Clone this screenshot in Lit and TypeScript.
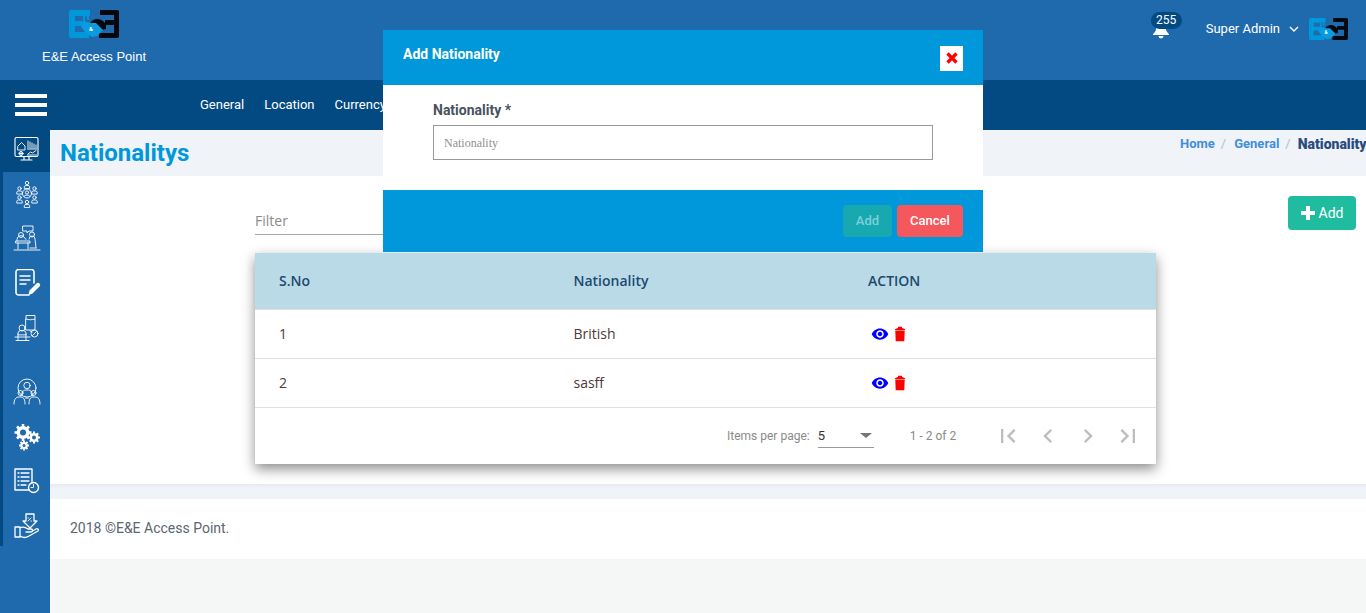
import { LitElement, html, css, svg } from "lit";
import { customElement } from "lit/decorators.js";

const logo = (w: number, h: number) => html`<svg class="logo" width=${w} height=${h} viewBox="0 0 50 28">
  <path d="M2 0h19v6H6v5h9v5H6v6h14v6H2a2 2 0 0 1-2-2V2a2 2 0 0 1 2-2z" fill="#0098da"/>
  <path d="M31 0h17a2 2 0 0 1 2 2v24a2 2 0 0 1-2 2H30v-5h15v-8h-9v-5h9V5H31z" fill="#05090f"/>
  <path d="M20 14c4-6 10-6 14-3l3 3v5l-4 1-5-5-4 1z" fill="#05090f"/>
  <path d="M15 11l7 2 5 0 7 7-3 3-3 3-5 1-6-4-5-6z" fill="#0a9be0"/>
  <path d="M14 6h2v6h-2zM18 6h2v4h-2z" fill="#0098da"/>
  <text x="20" y="21" font-size="6" font-family="Roboto, sans-serif" font-weight="700" fill="#fff">&amp;</text>
</svg>`;

const s = (body: unknown) => html`<svg class="nav-icon" width="28" height="28" viewBox="0 0 28 28" fill="none" stroke="#fff" stroke-width="0.9" stroke-linecap="round" stroke-linejoin="round">${body}</svg>`;

const person = (x: number, y: number, r = 2) => svg`<circle cx=${x} cy=${y} r=${r}/><path d="M${x - r - 1} ${y + r + 3.5}v-1.5a${r} ${r} 0 0 1 ${r} -${r - 0.5}h2a${r} ${r} 0 0 1 ${r} ${r - 0.5}v1.5z"/>`;

const icons = [
  s(svg`<rect stroke-width="1.100" x="2" y="1.500" width="23" height="19" rx="1.500"/><path d="M5 10l3.500-3.500L12 10v4H5zM15 12V5M17 12V6M19 12V7M21 12V8M23 12V9M14.500 13h9M15 18l2.500-2 2 1 3.500-2.500M14.500 19h9"/><circle cx="8" cy="17.500" r="2"/><path d="M8 15.500v4M6 17.500h4"/><path stroke-width="1.200" d="M11 21v2M16 21v2M8 24h11"/>`),
  s(svg`${person(14, 3, 1.700)}${person(6.500, 8.500, 1.700)}${person(21.500, 8.500, 1.700)}${person(6.500, 17.500, 1.700)}${person(21.500, 17.500, 1.700)}${person(14, 22, 1.700)}<circle cx="14" cy="13.500" r="4.500"/><circle cx="14" cy="12.500" r="1.600"/><path d="M11 16.500c0-2 6-2 6 0"/>`),
  s(svg`<path d="M10 1h10v5h-4l-2 2V6h-4z"/><circle cx="8" cy="10" r="2.500"/><circle cx="19" cy="9.500" r="2.500"/><path d="M4 16v-1.500a4 4 0 0 1 7-2.500l2 2.500M16 14a3 3 0 0 1 6 0l1 9M3 16h14v2H3zM5 18v6M15 18v6M17 23h6M1 25h26"/>`),
  s(svg`<path stroke-width="1.600" d="M16 26H5.500a2.500 2.500 0 0 1-2.500-2.500V3a2.500 2.500 0 0 1 2.500-2.500h13A2.500 2.500 0 0 1 21 3v11"/><path stroke-width="1.500" d="M7 7h10M7 11h10M7 15h6"/><path fill="#fff" stroke="none" d="M15.500 26l1-4.500 7-7a2 2 0 0 1 3 3l-7 7z"/>`),
  s(svg`<path d="M13 5V1.500h9V5M13 5c3 1 6 1 9 0v11h-9z"/><circle cx="21.500" cy="19.500" r="3.500"/><path d="M19.500 21.500l4-4M17 17l2 1"/>${person(9, 14, 3)}<path d="M2 23h15M3 26.500h13M5 20v6.500M13 20v6.500"/>`),
  s(svg`<circle cx="14" cy="10" r="9"/><circle cx="14" cy="7.500" r="3.200"/><path d="M8 18c1-5 3-6 5-6h2c2 0 4 1 5 6"/><circle cx="7.500" cy="15" r="2.500"/><circle cx="20.500" cy="15" r="2.500"/><path d="M1 26c0-5 2-7 5-7h2c3 0 4 3 4 7M16 26c0-4 1-7 4-7h2c3 0 5 2 5 7M12.500 20h3"/>`),
  html`<svg class="nav-icon" width="28" height="28" viewBox="0 0 28 28">
    <g fill="#fff">
      <circle cx="10" cy="9.500" r="6.500"/><g stroke="#fff" stroke-width="2.600"><path d="M10 1v17M1.500 9.500h17M4 3.500l12 12M16 3.500l-12 12"/></g>
      <circle cx="21" cy="14.500" r="4.600"/><g stroke="#fff" stroke-width="2"><path d="M21 8.500v12M15 14.500h12M16.800 10.300l8.400 8.400M25.200 10.300l-8.400 8.400"/></g>
      <circle cx="11" cy="22.500" r="3.600"/><g stroke="#fff" stroke-width="1.800"><path d="M11 17.500v10M6 22.500h10M7.500 19l7 7M14.500 19l-7 7"/></g>
    </g>
    <circle cx="10" cy="9.500" r="3" fill="#1f6aad"/><circle cx="21" cy="14.500" r="2" fill="#1f6aad"/><circle cx="11" cy="22.500" r="1.500" fill="#1f6aad"/>
  </svg>`,
  s(svg`<path stroke-width="1.400" d="M16 23H2V2h17v14"/><path stroke-width="1.300" d="M5 6h1M8 6h8M5 10h1M8 10h8M5 14h1M8 14h8M5 18h1M8 18h5"/><circle stroke-width="1.400" cx="20.500" cy="20.500" r="5"/><path d="M20.500 17.500v3h-2.500"/>`),
  s(svg`<path stroke-width="1.300" d="M13 2h8v7h3l-7 7-7-7h3z"/><path d="M15 9l3-3M15 6h.5M18 9h.5"/><path stroke-width="1.300" d="M2 15h5v10H2zM7 16c3-2 5-1 8 1h3a1.500 1.500 0 0 1 0 3h-5M7 24c3 2 6 2 9 0l9-5c1-1 0-3-2-2l-5 3"/>`),
];

const eye = html`<svg class="act" width="18" height="18" viewBox="0 0 24 24" fill="#0000ff"><path d="M12 4.500C7 4.500 2.730 7.610 1 12c1.730 4.390 6 7.500 11 7.500s9.270-3.110 11-7.500c-1.730-4.390-6-7.500-11-7.500zM12 17c-2.760 0-5-2.240-5-5s2.240-5 5-5 5 2.240 5 5-2.240 5-5 5zm0-8c-1.660 0-3 1.340-3 3s1.340 3 3 3 3-1.340 3-3-1.340-3-3-3z"/></svg>`;
const bin = html`<svg class="act" width="12" height="16" viewBox="0 0 12 16" fill="#ff0000"><path d="M1 3.200C2 2.500 3 2.200 4 2V.8h4V2c1 .2 2 .5 3 1.200V4.300H1zM1.300 4.800h9.400l-.4 10.400H1.700z"/></svg>`;
const pg = (d: string) => html`<span class="pg"><svg width="28" height="28" viewBox="0 0 24 24" fill="#bdbdbd"><path d=${d}/></svg></span>`;

@customElement("app-root")
export class AppRoot extends LitElement {
  static styles = css`
    :host { display: block; position: relative; width: 1366px; height: 613px; overflow: hidden; font-family: Roboto, sans-serif; background: #f5f7f7; }
    .top { height: 80px; background: #1f6aad; display: flex; color: #fff; }
    .brand { width: 188px; display: flex; flex-direction: column; align-items: center; padding-top: 10px; box-sizing: border-box; }
    .brand .logo { display: block; }
    .brand span { font-family: "Liberation Sans", Arial, sans-serif; font-size: 13px; margin-top: 11px; line-height: 16px; }
    .top-right { margin-left: auto; display: flex; align-items: flex-start; padding-right: 18px; }
    .bell { position: relative; width: 31px; height: 40px; margin-right: 24px; }
    .bell svg { position: absolute; left: 1px; top: 24px; }
    .badge { position: absolute; left: 0; top: 12px; width: 31px; height: 17px; border-radius: 9px; background: #044a82; font-size: 12px; line-height: 17px; text-align: center; }
    .user { font-size: 13px; line-height: 16px; padding-top: 21px; display: flex; align-items: center; height: 16px; }
    .user svg { margin-left: 8px; }
    .top-right > .logo { margin: 18px 0 0 9px; }

    .nav { height: 50px; background: #044a82; display: flex; align-items: center; color: #fff; }
    .burger { width: 200px; padding-left: 15px; box-sizing: border-box; display: flex; flex-direction: column; gap: 5px; }
    .burger i { display: block; width: 32px; height: 4px; background: #fff; }
    .links { display: flex; gap: 20px; font-size: 13px; margin-top: -1px; }

    .layout { display: flex; height: 483px; }
    .side { width: 50px; flex: none; background: #1f6aad; }
    .side .active { height: 42px; background: #044a82; display: flex; align-items: center; justify-content: center; padding-left: 3px; padding-bottom: 2px; box-sizing: border-box; }
    .group { height: 374px; border-left: 3px solid #044a82; box-sizing: border-box; }
    .item { height: 44.500px; display: flex; align-items: center; justify-content: center; box-sizing: border-box; }
    .gap { margin-top: 20px; }
    .side svg { display: block; }

    .content { flex: 1; min-width: 0; display: flex; flex-direction: column; }
    .title { height: 46px; flex: none; background: #f0f3f8; display: flex; padding-left: 10px; overflow: hidden; }
    h1 { flex: 1; margin: 0; font-size: 24px; line-height: 46px; font-weight: 700; color: #0098da; }
    .crumbs { flex: none; width: 186px; display: flex; font-size: 13px; font-weight: 700; line-height: 16px; padding-top: 6px; white-space: nowrap; color: #3f8fdc; }
    .crumbs em { font-style: normal; font-weight: 400; color: #b5bcc4; margin: 0 8px 0 6px; }
    .crumbs b { color: #2b4c7e; font-size: 14px; margin-left: -1px; }

    .main { height: 308px; flex: none; background: #fff; padding: 20px 10px 0 205px; box-sizing: border-box; }
    .tools { display: flex; height: 57px; }
    .filter { width: 345px; height: 39px; border-bottom: 1px solid #a8a8a8; font-family: "Open Sans", sans-serif; font-size: 14px; color: #8a8a8a; line-height: 50px; box-sizing: border-box; }
    .add-btn { margin-left: auto; width: 68px; height: 34px; border-radius: 4px; background: #20bca0; color: #fff; font-size: 14px; display: flex; align-items: center; justify-content: center; gap: 4px; }
    .card { width: 901px; height: 211px; background: #fff; box-shadow: 0 5px 12px rgba(0,0,0,.45); font-family: "Open Sans", sans-serif; font-size: 14px; }
    .row { display: grid; grid-template-columns: 294.500px 294.500px 1fr; padding: 0 0 2px 24px; align-items: center; height: 49px; border-bottom: 1px solid #e0e0e0; box-sizing: border-box; color: #4e3a3a; }
    .row.head { height: 57px; background: #bbdae8; font-weight: 600; color: #1b4a6e; }
    .acts { display: flex; align-items: center; gap: 5px; padding: 2px 0 0 3px; }
    .act { display: block; }
    .pager { height: 56px; display: flex; align-items: center; font-family: Roboto, sans-serif; font-size: 12px; color: #8a8a8a; padding-left: 472px; }
    .per { margin-right: 8px; }
    .sel { width: 56px; height: 25px; border-bottom: 1px solid #9a9a9a; box-sizing: border-box; display: flex; align-items: center; justify-content: space-between; font-size: 13px; color: #333; margin-top: -1px; }
    .sel i { width: 0; height: 0; border-left: 6px solid transparent; border-right: 6px solid transparent; border-top: 5px solid #757575; margin-right: 2px; }
    .range { margin-left: 36px; width: 74px; margin-right: 4px; margin-top: -1px; }
    .pg { width: 40px; height: 40px; display: flex; align-items: center; justify-content: center; }
    .pg svg { display: block; }

    .sep { height: 15px; flex: none; background: linear-gradient(#e8ebf0, #f0f3f8 5px); box-sizing: border-box; }
    .foot { height: 60px; flex: none; background: #fff; font-family: Roboto, sans-serif; font-size: 14px; color: #5b6670; line-height: 58px; padding-left: 20px; }
    .rest { flex: 1; background: #f5f7f7; }

    .modal { position: absolute; left: 383px; top: 30px; width: 600px; height: 222px; display: flex; flex-direction: column; background: #fff; }
    .m-head { height: 55px; background: #0098da; display: flex; align-items: center; justify-content: space-between; padding: 0 20px; box-sizing: border-box; color: #fff; font-size: 14px; font-weight: 700; }
    .m-head span { margin-top: -7px; }
    .close { width: 23px; height: 25px; background: #fff; display: flex; align-items: center; justify-content: center; margin-top: 1px; }
    .m-body { height: 105px; padding: 17px 50px 0; box-sizing: border-box; }
    .m-body label { display: block; font-size: 14px; font-weight: 700; color: #47525e; line-height: 16px; margin-bottom: 7px; }
    .input { height: 35px; border: 1px solid #999; box-sizing: border-box; font-family: "Liberation Serif", serif; font-size: 12px; color: #8f8f8f; padding-left: 10px; line-height: 35px; }
    .m-foot { height: 62px; background: #0098da; display: flex; justify-content: flex-end; align-items: center; gap: 5px; padding: 0 20px; box-sizing: border-box; font-size: 13px; font-weight: 500; }
    .btn { height: 32px; border-radius: 4px; display: flex; align-items: center; justify-content: center; padding-bottom: 2px; box-sizing: border-box; }
    .btn.a { width: 49px; background: #17a8b0; color: #7fcfdc; }
    .btn.c { width: 66px; background: #f4575c; color: #fff; }
  `;

  render() {
    return html`
      <div class="top">
        <div class="brand">${logo(50, 28)}<span>E&amp;E Access Point</span></div>
        <div class="top-right">
          <div class="bell">
            <svg width="18" height="15" viewBox="0 0 18 15" fill="#fff"><path d="M9 0c3 0 5 2 5 5 0 2 1 3 3 5v1H1v-1c2-2 3-3 3-5 0-3 2-5 5-5zM6.500 12h5a2.500 2.500 0 0 1-5 0z"/></svg>
            <div class="badge">255</div>
          </div>
          <div class="user">Super Admin
            <svg width="12" height="8" viewBox="0 0 12 8" fill="none" stroke="#fff" stroke-width="1.400"><path d="M2 2l4 4 4-4"/></svg>
          </div>
          ${logo(39, 22)}
        </div>
      </div>
      <div class="nav">
        <div class="burger"><i></i><i></i><i></i></div>
        <div class="links"><span>General</span><span>Location</span><span>Currency</span></div>
      </div>
      <div class="layout">
        <aside class="side">
          <div class="active">${icons[0]}</div>
          <div class="group">
            ${icons.slice(1, 5).map((i) => html`<div class="item">${i}</div>`)}
            <div class="gap">${icons.slice(5).map((i) => html`<div class="item">${i}</div>`)}</div>
          </div>
        </aside>
        <div class="content">
          <div class="title">
            <h1>Nationalitys</h1>
            <div class="crumbs"><span>Home</span><em>/</em><span>General</span><em>/</em><b>Nationality</b></div>
          </div>
          <div class="main">
            <div class="tools">
              <div class="filter">Filter</div>
              <div class="add-btn">
                <svg width="14" height="14" viewBox="0 0 14 14" fill="#fff"><path d="M5 0h4v5h5v4H9v5H5V9H0V5h5z"/></svg>Add
              </div>
            </div>
            <div class="card">
              <div class="row head"><span>S.No</span><span>Nationality</span><span>ACTION</span></div>
              <div class="row"><span>1</span><span>British</span><span class="acts">${eye}${bin}</span></div>
              <div class="row"><span>2</span><span>sasff</span><span class="acts">${eye}${bin}</span></div>
              <div class="pager">
                <span class="per">Items per page:</span>
                <div class="sel"><span>5</span><i></i></div>
                <span class="range">1 - 2 of 2</span>
                ${pg("M18.410 16.590L13.820 12l4.590-4.590L17 6l-6 6 6 6zM6 6h2v12H6z")}
                ${pg("M15.410 7.410L14 6l-6 6 6 6 1.410-1.410L10.830 12z")}
                ${pg("M10 6L8.590 7.410 13.170 12l-4.580 4.590L10 18l6-6z")}
                ${pg("M5.590 7.410L10.180 12l-4.590 4.590L7 18l6-6-6-6zM16 6h2v12h-2z")}
              </div>
            </div>
          </div>
          <div class="sep"></div>
          <div class="foot">2018 ©E&amp;E Access Point.</div>
          <div class="rest"></div>
        </div>
      </div>
      <div class="modal">
        <div class="m-head"><span>Add Nationality</span>
          <div class="close"><svg width="12" height="12" viewBox="0 0 12 12" stroke="#f00" stroke-width="3.200"><path d="M1.500 1.500l9 9M10.500 1.500l-9 9"/></svg></div>
        </div>
        <div class="m-body"><label>Nationality *</label><div class="input">Nationality</div></div>
        <div class="m-foot"><div class="btn a">Add</div><div class="btn c">Cancel</div></div>
      </div>
    `;
  }
}
